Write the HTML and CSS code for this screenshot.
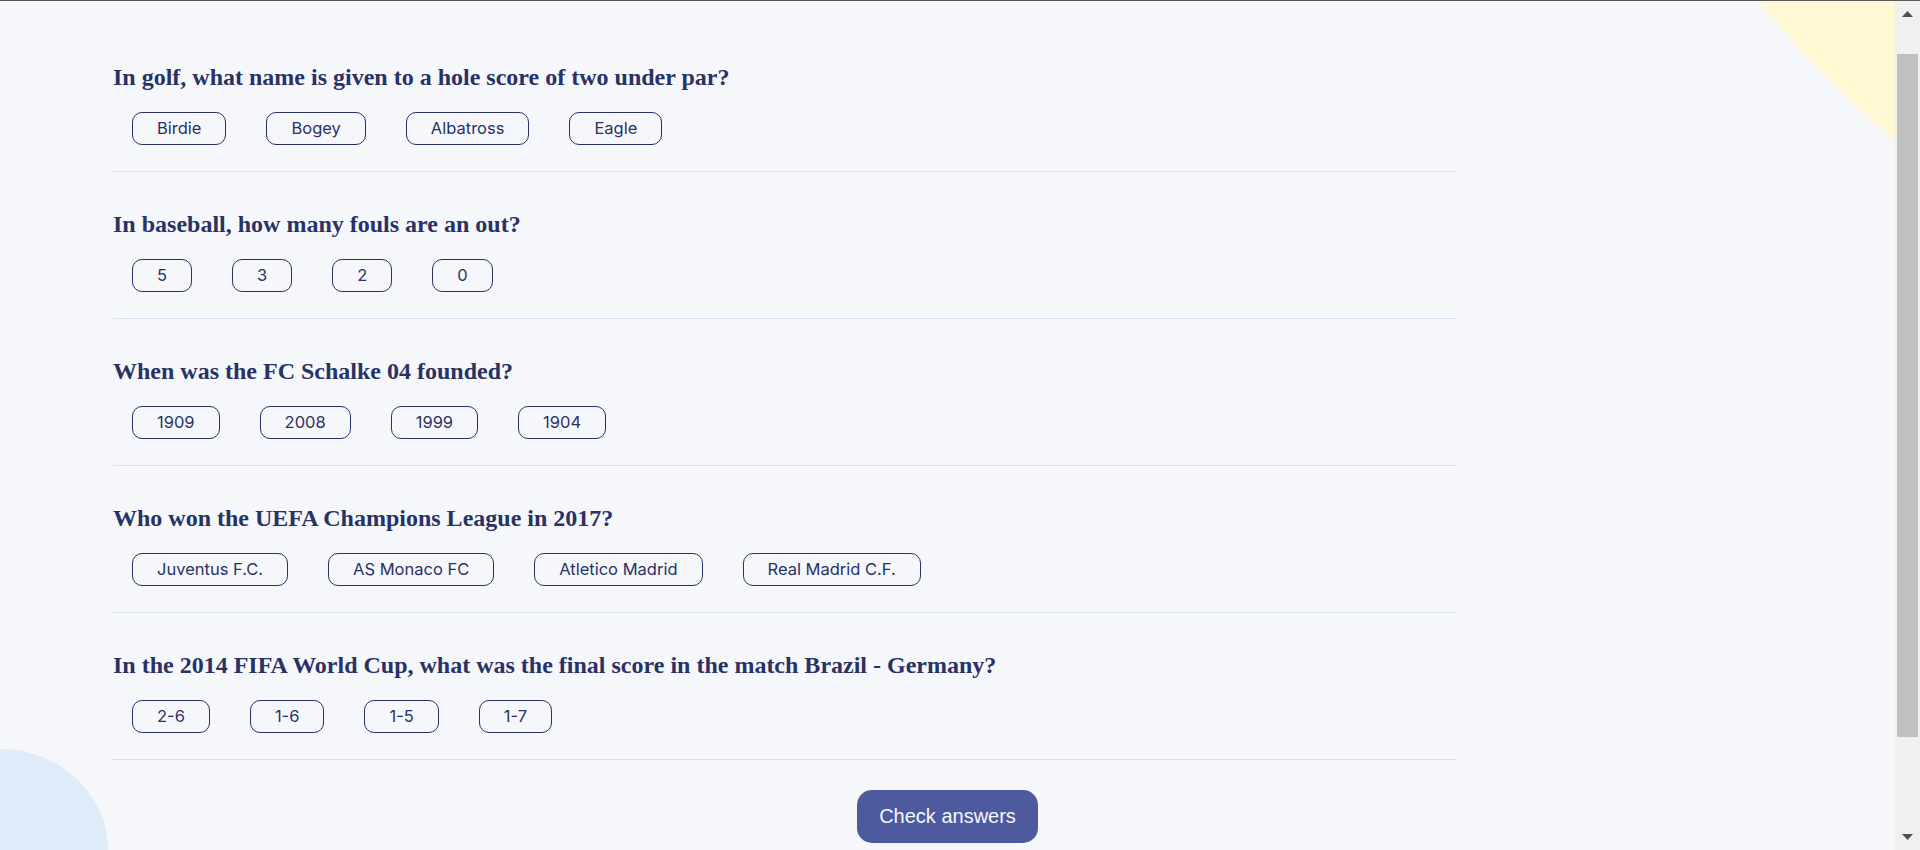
FILE: index.html
```html
<!DOCTYPE html>
<html lang="en">
<head>
<meta charset="utf-8">
<title>Quizzical</title>
<link rel="stylesheet" href="styles.css">
</head>
<body>
<div class="window">
  <main class="page">
    <div class="blob blob-yellow">
      <svg width="137" height="140" viewBox="0 0 137 140"><path d="M0 0 Q62 75 137 140 L137 0 Z" fill="#fff8d2"/></svg>
    </div>
    <div class="blob blob-blue"></div>

    <section class="quiz">
      <div class="question">
        <h2 class="question-title">In golf, what name is given to a hole score of two under par?</h2>
        <div class="options">
          <button class="option">Birdie</button>
          <button class="option">Bogey</button>
          <button class="option">Albatross</button>
          <button class="option">Eagle</button>
        </div>
      </div>
      <div class="question">
        <h2 class="question-title">In baseball, how many fouls are an out?</h2>
        <div class="options">
          <button class="option">5</button>
          <button class="option">3</button>
          <button class="option">2</button>
          <button class="option">0</button>
        </div>
      </div>
      <div class="question">
        <h2 class="question-title">When was the FC Schalke 04 founded?</h2>
        <div class="options">
          <button class="option">1909</button>
          <button class="option">2008</button>
          <button class="option">1999</button>
          <button class="option">1904</button>
        </div>
      </div>
      <div class="question">
        <h2 class="question-title">Who won the UEFA Champions League in 2017?</h2>
        <div class="options">
          <button class="option">Juventus F.C.</button>
          <button class="option">AS Monaco FC</button>
          <button class="option">Atletico Madrid</button>
          <button class="option">Real Madrid C.F.</button>
        </div>
      </div>
      <div class="question">
        <h2 class="question-title">In the 2014 FIFA World Cup, what was the final score in the match Brazil - Germany?</h2>
        <div class="options">
          <button class="option">2-6</button>
          <button class="option">1-6</button>
          <button class="option">1-5</button>
          <button class="option">1-7</button>
        </div>
      </div>
    </section>

    <div class="actions">
      <button class="check-btn">Check answers</button>
    </div>
  </main>

  <div class="scrollbar" aria-hidden="true">
    <div class="sb-btn">
      <svg width="11" height="6" viewBox="0 0 11 6"><polygon points="5.5,0 11,6 0,6" fill="#505050"/></svg>
    </div>
    <div class="sb-thumb"></div>
    <div class="sb-spacer"></div>
    <div class="sb-btn">
      <svg width="11" height="6" viewBox="0 0 11 6"><polygon points="0,0 11,0 5.5,6" fill="#505050"/></svg>
    </div>
  </div>
</div>
</body>
</html>
```
FILE: styles.css
```css
html, body {
  margin: 0;
  padding: 0;
}

body {
  height: 850px;
  overflow: hidden;
  background: #f5f7fb;
  border-top: 1px solid #5a5a5a;
  box-sizing: border-box;
}

.window {
  display: flex;
  height: 849px;
}

.page {
  flex: 1;
  position: relative;
  overflow: hidden;
  padding-top: 62px;
  box-sizing: border-box;
}

.blob {
  position: absolute;
  pointer-events: none;
}

.blob-yellow {
  top: 0;
  right: 0;
  width: 137px;
  height: 140px;
}

.blob-yellow svg {
  display: block;
}

.blob-blue {
  left: 0;
  bottom: 0;
  width: 108px;
  height: 101px;
  background: #deebf8;
  border-top-right-radius: 108px 101px;
}

.quiz {
  position: relative;
  margin-left: 113px;
  width: 1344px;
}

.question {
  padding-bottom: 26px;
  border-bottom: 1px solid #dbdef0;
}

.question + .question {
  padding-top: 38px;
}

.question-title {
  margin: 0 0 21px;
  font-family: "Liberation Serif", "Times New Roman", serif;
  font-weight: 700;
  font-size: 24px;
  line-height: 28px;
  color: #293264;
}

.options {
  display: flex;
  gap: 40px;
  padding-left: 19px;
}

.option {
  font-family: Inter, "Liberation Sans", sans-serif;
  font-size: 16.5px;
  line-height: 19px;
  padding: 6px 24px;
  border: 1px solid #293264;
  border-radius: 10px;
  background: transparent;
  color: #293264;
  cursor: pointer;
}

.actions {
  position: relative;
  display: flex;
  justify-content: center;
  margin-top: 30px;
}

.check-btn {
  font-family: "Liberation Sans", Arial, sans-serif;
  font-size: 20px;
  line-height: 23px;
  padding: 15px 22px;
  border: none;
  border-radius: 15px;
  background: #4d5b9e;
  color: #f5f7fb;
  cursor: pointer;
}

.scrollbar {
  width: 25px;
  flex: none;
  display: flex;
  flex-direction: column;
  align-items: center;
  background: #f0f0f0;
}

.sb-btn {
  height: 26px;
  flex: none;
  display: flex;
  align-items: center;
  justify-content: center;
}

.sb-thumb {
  flex: none;
  width: 21px;
  height: 683px;
  margin-top: 27px;
  background: #c0c0c0;
}

.sb-spacer {
  flex: 1;
}
```
